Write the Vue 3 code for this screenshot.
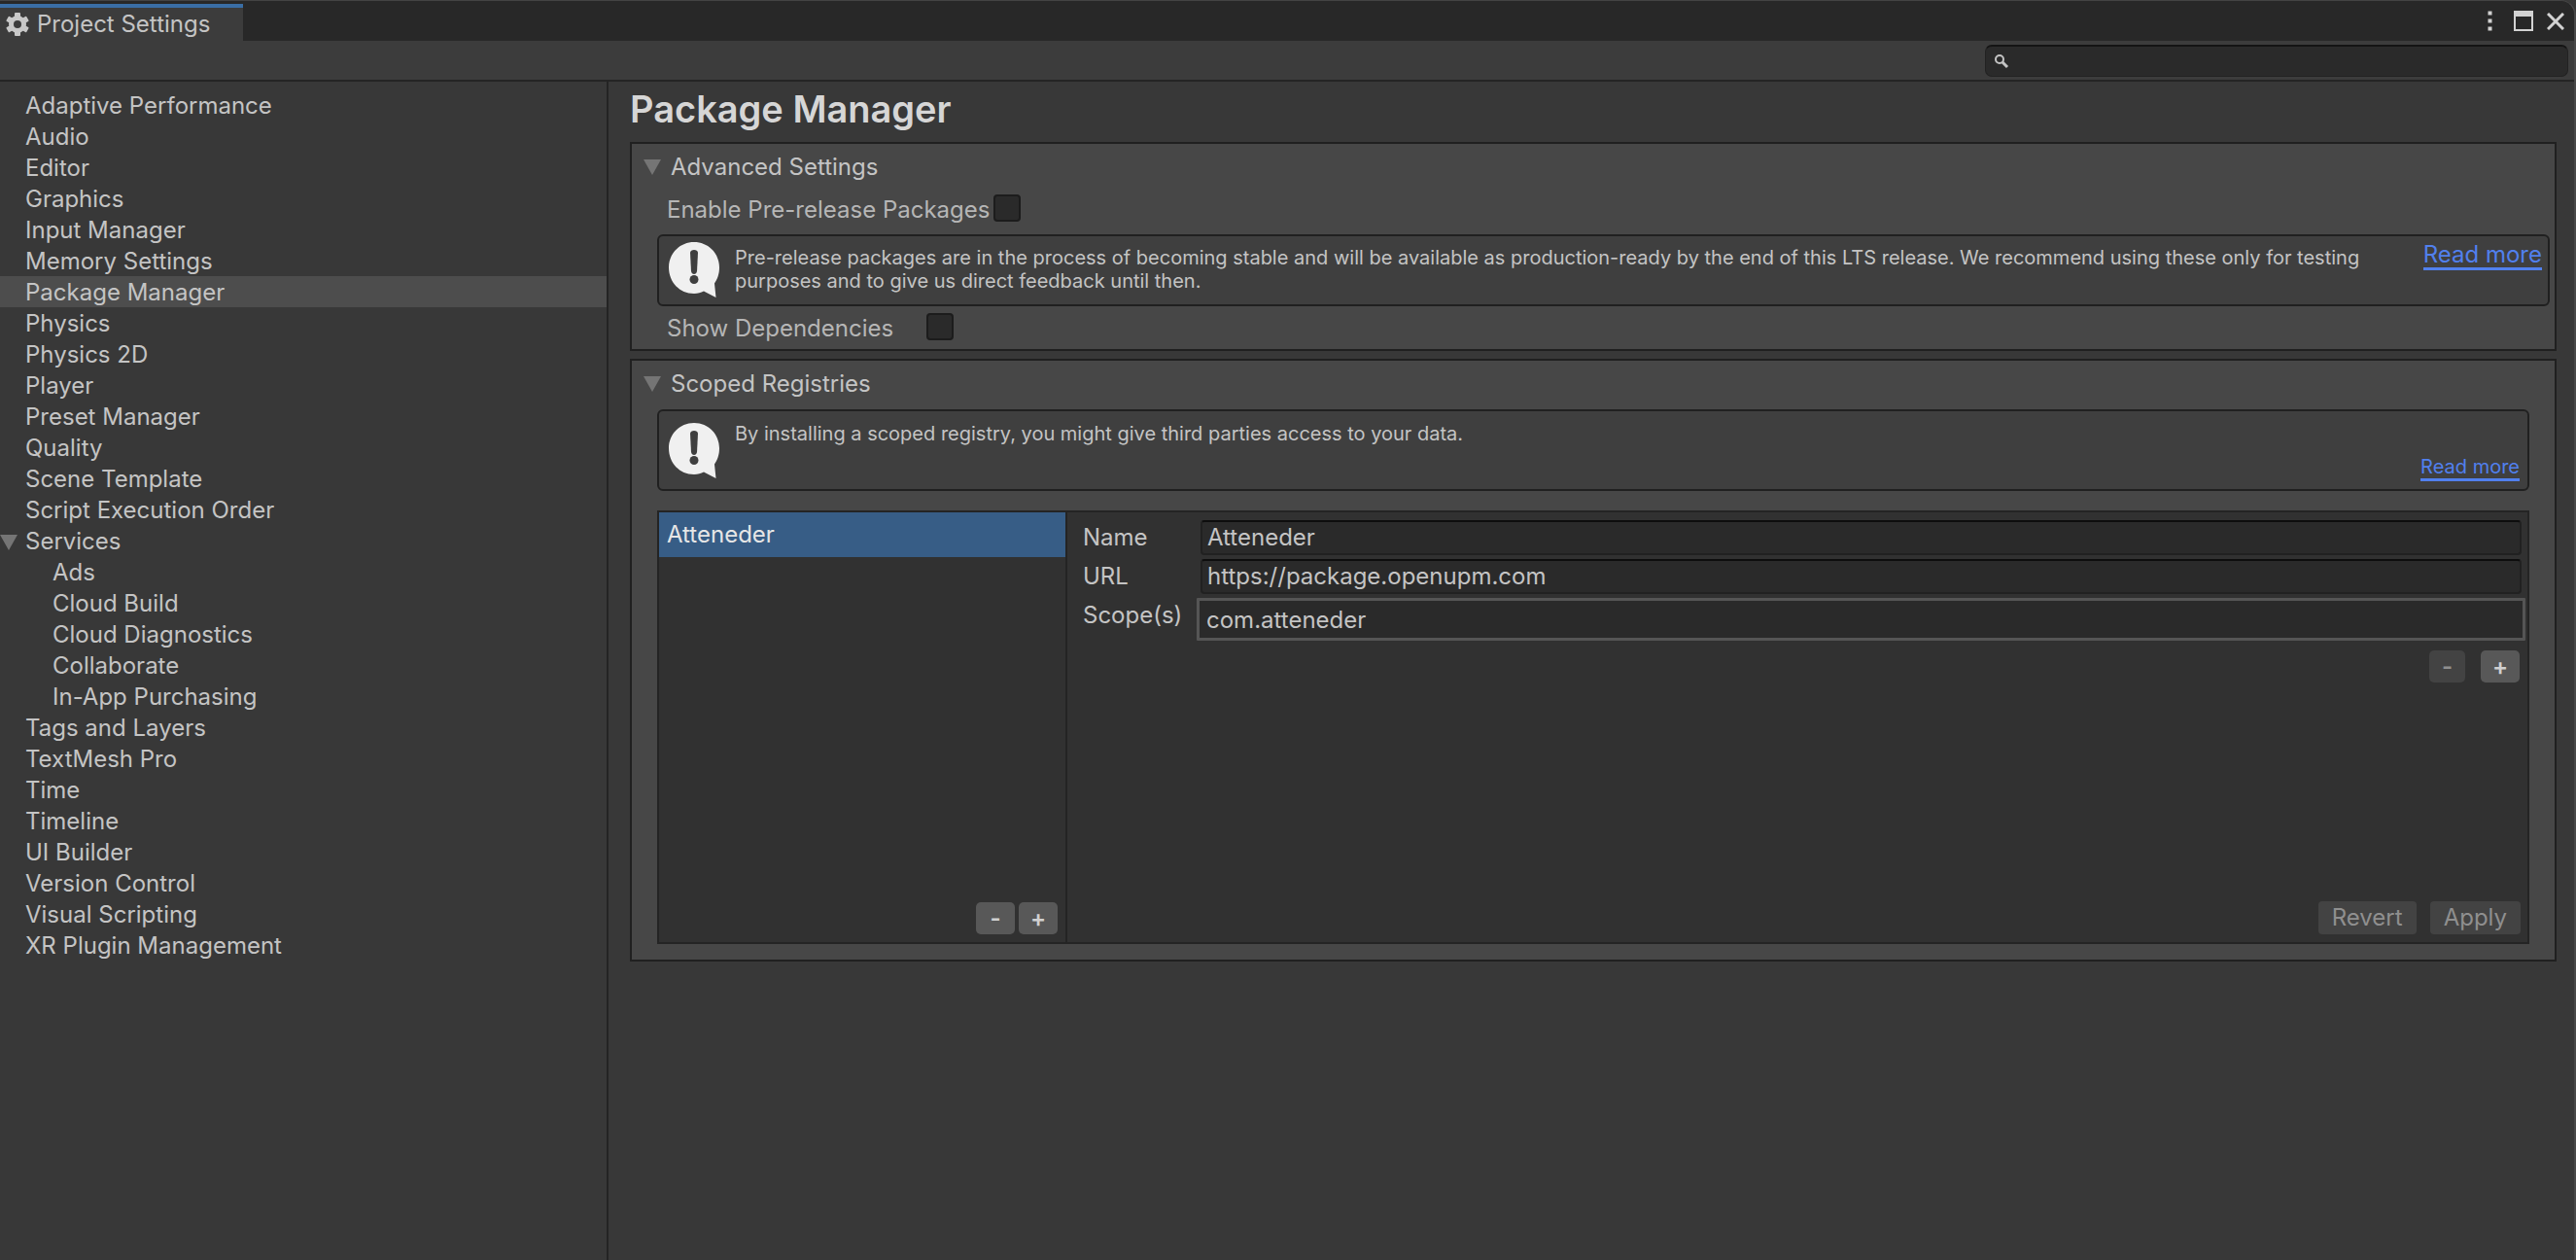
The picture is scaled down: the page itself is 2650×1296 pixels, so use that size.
<script setup>
import { ref } from 'vue'

const sections = [
  { name: 'Adaptive Performance' },
  { name: 'Audio' },
  { name: 'Editor' },
  { name: 'Graphics' },
  { name: 'Input Manager' },
  { name: 'Memory Settings' },
  { name: 'Package Manager' },
  { name: 'Physics' },
  { name: 'Physics 2D' },
  { name: 'Player' },
  { name: 'Preset Manager' },
  { name: 'Quality' },
  { name: 'Scene Template' },
  { name: 'Script Execution Order' },
  { name: 'Services', open: true },
  { name: 'Ads', child: true },
  { name: 'Cloud Build', child: true },
  { name: 'Cloud Diagnostics', child: true },
  { name: 'Collaborate', child: true },
  { name: 'In-App Purchasing', child: true },
  { name: 'Tags and Layers' },
  { name: 'TextMesh Pro' },
  { name: 'Time' },
  { name: 'Timeline' },
  { name: 'UI Builder' },
  { name: 'Version Control' },
  { name: 'Visual Scripting' },
  { name: 'XR Plugin Management' },
]

const selected = ref('Package Manager')
const query = ref('')
const preRelease = ref(false)
const showDependencies = ref(false)
const registry = ref({
  name: 'Atteneder',
  url: 'https://package.openupm.com',
  scope: 'com.atteneder',
})
</script>

<template>
  <div class="window">
    <header class="tabbar">
      <div class="tab">
        <svg class="gear" viewBox="0 0 24 24" aria-hidden="true">
          <g fill="#c8c8c8">
            <rect v-for="a in [0, 60, 120]" :key="a" x="9" y="0" width="6" height="24" rx="1" :transform="`rotate(${a} 12 12)`" />
          </g>
          <circle cx="12" cy="12" r="6.5" fill="none" stroke="#c8c8c8" stroke-width="5" />
          <circle cx="12" cy="12" r="4" fill="#3c3c3c" />
        </svg>
        <span>Project Settings</span>
      </div>
      <div class="controls">
        <button type="button" class="menu" aria-label="Menu">
          <svg width="5" height="21" viewBox="0 0 5 21"><path d="M0.500 0.500h4v4h-4zM0.500 8.500h4v4h-4zM0.500 16.500h4v4h-4z" fill="#d2d2d2" /></svg>
        </button>
        <button type="button" aria-label="Maximize">
          <svg width="20" height="21" viewBox="0 0 20 21"><path d="M1 1h18v19H1z" fill="none" stroke="#d2d2d2" stroke-width="2" /><path d="M0 0h20v6H0z" fill="#d2d2d2" /></svg>
        </button>
        <button type="button" aria-label="Close">
          <svg width="18" height="18" viewBox="0 0 18 18"><path d="M1 1l16 16M17 1L1 17" fill="none" stroke="#d2d2d2" stroke-width="3" /></svg>
        </button>
      </div>
    </header>

    <div class="toolbar">
      <label class="search">
        <svg width="16" height="16" viewBox="0 0 16 16" aria-hidden="true">
          <circle cx="6" cy="6" r="4" fill="none" stroke="#c4c4c4" stroke-width="2" />
          <path d="M9 9l5 5" stroke="#c4c4c4" stroke-width="3" />
        </svg>
        <input v-model="query" type="text" aria-label="Search settings" />
      </label>
    </div>

    <div class="body">
      <nav class="sidebar">
        <a
          v-for="s in sections"
          :key="s.name"
          href="#"
          :class="{ active: s.name === selected, child: s.child }"
          @click.prevent="selected = s.name"
        ><span v-if="s.open" class="arrow" />{{ s.name }}</a>
      </nav>

      <main class="content">
        <h1>Package Manager</h1>

        <section class="panel advanced">
          <h2><span class="arrow" />Advanced Settings</h2>
          <div class="toggle">
            <label for="pre">Enable Pre-release Packages</label>
            <input id="pre" v-model="preRelease" type="checkbox" />
          </div>
          <div class="info">
            <svg class="bubble" viewBox="0 0 54 60" aria-hidden="true">
              <path d="M27 1C12 1 1 13 1 27C1 42 12 54 27 54C31 54 34 53 37 51.500L49.500 58L48 43.500C51 39 53 34 53 27C53 13 42 1 27 1z" fill="#f0f0f0" />
              <path d="M23 12C23 8 31 8 31 12L30 31C29.500 35 24.500 35 24 31z" fill="#3f3f3f" />
              <circle cx="27" cy="39.500" r="4.500" fill="#3f3f3f" />
            </svg>
            <p>Pre-release packages are in the process of becoming stable and will be available as production-ready by the end of this LTS release. We recommend using these only for testing purposes and to give us direct feedback until then.</p>
            <a class="more" href="#">Read more</a>
          </div>
          <div class="toggle deps">
            <label for="deps">Show Dependencies</label>
            <input id="deps" v-model="showDependencies" type="checkbox" />
          </div>
        </section>

        <section class="panel scoped">
          <h2><span class="arrow" />Scoped Registries</h2>
          <div class="info">
            <svg class="bubble" viewBox="0 0 54 60" aria-hidden="true">
              <path d="M27 1C12 1 1 13 1 27C1 42 12 54 27 54C31 54 34 53 37 51.500L49.500 58L48 43.500C51 39 53 34 53 27C53 13 42 1 27 1z" fill="#f0f0f0" />
              <path d="M23 12C23 8 31 8 31 12L30 31C29.500 35 24.500 35 24 31z" fill="#3f3f3f" />
              <circle cx="27" cy="39.500" r="4.500" fill="#3f3f3f" />
            </svg>
            <p>By installing a scoped registry, you might give third parties access to your data.</p>
            <a class="more" href="#">Read more</a>
          </div>

          <div class="registries">
            <div class="list">
              <button type="button" class="item">Atteneder</button>
              <div class="buttons">
                <button type="button" aria-label="Remove registry">-</button>
                <button type="button" aria-label="Add registry">+</button>
              </div>
            </div>
            <form class="details" @submit.prevent>
              <div class="field">
                <label for="name">Name</label>
                <input id="name" v-model="registry.name" type="text" />
              </div>
              <div class="field">
                <label for="url">URL</label>
                <input id="url" v-model="registry.url" type="text" />
              </div>
              <div class="field scopes">
                <label for="scope">Scope(s)</label>
                <input id="scope" v-model="registry.scope" type="text" />
              </div>
              <div class="buttons">
                <button type="button" class="narrow" disabled aria-label="Remove scope">-</button>
                <button type="button" aria-label="Add scope">+</button>
              </div>
              <div class="actions">
                <button type="button" disabled>Revert</button>
                <button type="submit" disabled>Apply</button>
              </div>
            </form>
          </div>
        </section>
      </main>
    </div>
  </div>
</template>

<style>
body {
  background: #383838;
}
</style>

<style scoped>
* {
  box-sizing: border-box;
}

.window {
  display: flex;
  flex-direction: column;
  min-height: 100vh;
  background: #383838;
  border-top: 1px solid #444;
  border-right: 2px solid #484848;
  border-top-right-radius: 16px;
  color: #c4c4c4;
  font-family: Inter, "Liberation Sans", sans-serif;
  font-size: 24px;
  line-height: 32px;
}

button,
input {
  margin: 0;
  border: 0;
  font: inherit;
  color: inherit;
}

a {
  color: inherit;
  text-decoration: none;
}

.tabbar {
  display: flex;
  justify-content: space-between;
  height: 41px;
  background: #282828;
  border-top-right-radius: 14px;
}

.tab {
  display: flex;
  align-items: center;
  gap: 8px;
  width: 250px;
  height: 38px;
  margin-top: 3px;
  padding-left: 6px;
  border-top: 4px solid #3a6ea5;
  background: #3c3c3c;
}

.gear {
  width: 24px;
  height: 24px;
}

.controls {
  display: flex;
  align-items: center;
  gap: 14px;
  padding-right: 10px;
}

.controls button {
  display: flex;
  padding: 0;
  background: none;
}

.controls .menu {
  margin-right: 8px;
}

.toolbar {
  display: flex;
  justify-content: flex-end;
  height: 42px;
  padding: 4px 6px 0 0;
  background: #3c3c3c;
  border-bottom: 2px solid #242424;
}

.search {
  display: flex;
  align-items: center;
  gap: 8px;
  width: 600px;
  height: 33px;
  padding-left: 8px;
  background: #2a2a2a;
  border: 1px solid #222;
  border-top: 2px solid #141414;
  border-radius: 7px;
}

.search input {
  flex: 1;
  height: 28px;
  background: transparent;
}

.body {
  display: flex;
  flex: 1;
}

.sidebar {
  flex: none;
  width: 626px;
  padding-top: 8px;
  border-right: 2px solid #242424;
}

.sidebar a {
  display: block;
  position: relative;
  padding: 2px 0 0 26px;
  line-height: 30px;
}

.sidebar .child {
  padding-left: 54px;
}

.sidebar .active {
  background: #4d4d4d;
}

.arrow {
  display: inline-block;
  width: 18px;
  height: 16px;
  background: #757575;
  clip-path: polygon(0 0, 100% 0, 50% 100%);
}

.sidebar .arrow {
  position: absolute;
  left: 0;
  top: 10px;
}

.content {
  flex: 1;
  padding: 8px 18px 0 22px;
}

h1 {
  margin: 0;
  font-size: 38px;
  font-weight: 600;
  line-height: 40px;
  color: #d6d6d6;
}

.panel {
  background: #474747;
  border: 2px solid #202020;
  padding: 8px 0 0 26px;
}

h1 + .panel {
  margin-top: 14px;
}

.panel + .panel {
  margin-top: 8px;
}

h2 {
  display: flex;
  align-items: center;
  gap: 10px;
  margin: 0 0 0 -14px;
  font-size: 24px;
  font-weight: 400;
  line-height: 32px;
}

.toggle {
  display: flex;
  align-items: flex-start;
  gap: 4px;
  padding-left: 10px;
}

.toggle input {
  appearance: none;
  width: 28px;
  height: 28px;
  background: #2a2a2a;
  border: 2px solid #1c1c1c;
  border-radius: 4px;
}

.toggle label {
  color: #b6b6b6;
}

.info {
  display: flex;
  background: #3f3f3f;
  border: 2px solid #202020;
  border-radius: 6px;
  padding: 5px 6px 4px 9px;
  font-size: 20px;
  line-height: 24px;
}

.bubble {
  flex: none;
  width: 54px;
  height: 60px;
}

.info p {
  flex: 1;
  margin: 0 40px 0 15px;
}

.more {
  color: #5180ee;
  border-bottom: 3px solid #5180ee;
}

.advanced .toggle {
  margin-top: 12px;
}

.advanced .info {
  height: 74px;
  margin: 9px 5px 0 0;
}

.advanced .info p {
  padding-top: 5px;
}

.advanced .more {
  align-self: flex-start;
  font-size: 24px;
  line-height: 27px;
}

.advanced .deps {
  gap: 34px;
  margin: 7px 0 5px;
}

.scoped {
  padding-bottom: 16px;
}

.scoped .info {
  height: 84px;
  margin: 10px 26px 20px 0;
  padding-top: 11px;
}

.scoped .more {
  align-self: flex-end;
  margin: 0 2px 4px 0;
}

.registries {
  display: flex;
  height: 446px;
  margin-right: 26px;
  background: #313131;
  border: 2px solid #242424;
}

.list {
  display: flex;
  flex-direction: column;
  justify-content: space-between;
  width: 420px;
  border-right: 2px solid #242424;
}

.item {
  height: 46px;
  padding: 0 8px;
  background: #375d86;
  color: #e6e6e6;
  text-align: left;
}

.buttons {
  display: flex;
  justify-content: flex-end;
  gap: 4px;
  padding: 0 8px 8px 0;
}

.buttons button {
  width: 40px;
  height: 33px;
  padding: 0;
  background: #585858;
  border-radius: 5px;
  color: #d0d0d0;
  font-weight: 600;
}

.details {
  display: flex;
  flex: 1;
  flex-direction: column;
  padding: 8px 6px 8px 16px;
}

.field {
  display: flex;
  height: 36px;
  margin-bottom: 4px;
  line-height: 36px;
}

.field label {
  width: 121px;
}

.field input {
  flex: 1;
  height: 36px;
  padding: 0 5px;
  background: #2a2a2a;
  border: 2px solid #212121;
  border-top-color: #0d0d0d;
  border-radius: 4px;
}

.details .scopes {
  height: 44px;
  margin: 0 -4px 0 0;
}

.scopes label {
  width: 117px;
}

.scopes input {
  height: 44px;
  padding: 0 7px;
  border: 3px solid #555;
  border-radius: 1px;
}

.details .buttons {
  gap: 16px;
  margin-top: 10px;
  padding: 0 2px 0 0;
}

.details .narrow {
  width: 37px;
}

.details button:disabled {
  background: #434343;
  color: #8f8f8f;
}

.actions {
  display: flex;
  justify-content: flex-end;
  gap: 14px;
  margin-top: auto;
  padding-right: 1px;
}

.actions button {
  height: 34px;
  padding: 0 14px;
  border-radius: 4px;
}
</style>
